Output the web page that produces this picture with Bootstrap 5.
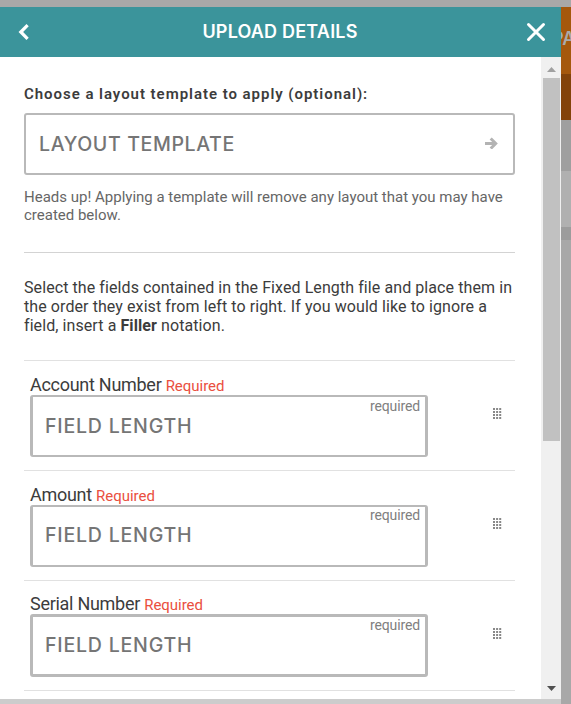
<!DOCTYPE html>
<html lang="en">
<head>
<meta charset="utf-8">
<meta name="viewport" content="width=device-width, initial-scale=1">
<title>Upload Details</title>
<link href="https://cdn.jsdelivr.net/npm/bootstrap@5.3.0/dist/css/bootstrap.min.css" rel="stylesheet">
<style>
body{font-family:Roboto,"Liberation Sans",sans-serif;color:#3c3c3c;background:#a8a8a8;height:704px;overflow:hidden}
.stage{height:697px;margin-top:7px}
.dialog-pane{width:561px;background:#ccc}
.title-bar{height:50px;background:#3b949b;color:#fff;padding:0 15px 0 18px}
.plain-btn{background:none;border:0;padding:0;line-height:0;color:inherit}
.title-text{font:600 18px/50px Inter,sans-serif;letter-spacing:.2px;margin:0 0 0 4px}
.scroll-area{height:642px;background:#fff}
.sheet{width:541px;padding:27px 26px 0 24px}
.choose-label{font-size:15px;line-height:20px;font-weight:600;letter-spacing:.96px;display:block;margin-bottom:9px}
.big-box{border:2px solid #b9b9b9;border-radius:3px;height:62px;padding:0 15px 0 13px;background:#fff;color:#757575;font:500 19.6px/58px Inter,sans-serif;letter-spacing:.6px;width:100%;text-align:left}
.field-box{width:398px;border-width:2px 3px;padding-left:12px;letter-spacing:.76px}
.field-mid{line-height:56px}
.field-last{border-width:3px;height:63px;line-height:57px}
.flag{position:absolute;top:0;right:5px;font:14px/18px Roboto,sans-serif;letter-spacing:-.12px;color:#808080}
.field-mid .flag,.field-last .flag{top:-1px}
.help{font-size:15px;line-height:18px;color:#666;margin:13px 0 28px}
.rule{height:1px;background:#d3d3d3}
.intro{font-size:16px;line-height:19px;letter-spacing:.085px;margin:25px 0 25px}
.field-row{height:110px;border-top:1px solid #e1e1e1;padding:14px 13px 0 6px}
.field-name{font-size:18px;line-height:20px;height:20px;letter-spacing:-.28px;display:block;white-space:nowrap}
.field-row:nth-child(n+3) .field-name{margin-top:-1px}
.req{font-size:15px;letter-spacing:-.03px;color:#ea4f40}
.grip{margin-top:33px;line-height:0}
.bar{width:20px;background:#f0f0f0;padding-right:1px;padding-left:2px}
.bar-btn{height:21px}
.thumb{height:363px;background:#c1c1c1}
.page-strip{width:10px}
.s1{height:67px;background:#a5580d;color:#aaa;font:600 18px/64px Inter,sans-serif;overflow:hidden}
.s1 span{display:block;margin-left:-9px}
.s2{height:46px;background:#83430a}.s3{height:51px;background:#9f9f9f}.s4{height:56px;background:#b0b0b0}.s5{height:13px;background:#9c9c9c}
</style>
<script src="https://cdn.jsdelivr.net/npm/bootstrap@5.3.0/dist/js/bootstrap.bundle.min.js"></script>
</head>
<body>
<svg width="0" height="0" class="position-absolute"><defs>
<g id="dots" fill="#888"><path d="M0 0h2v2H0zM3.100 0h2v2h-2zM6.200 0h2v2h-2zM0 3h2v2H0zM3.100 3h2v2h-2zM6.200 3h2v2h-2zM0 6h2v2H0zM3.100 6h2v2h-2zM6.200 6h2v2h-2zM0 9h2v2H0zM3.100 9h2v2h-2zM6.200 9h2v2h-2z"/></g>
</defs></svg>
<div class="stage d-flex">
  <div class="dialog-pane flex-shrink-0">
    <header class="title-bar d-flex justify-content-between align-items-center">
      <button class="plain-btn" aria-label="Back"><svg width="12" height="16" viewBox="0 0 12 16"><path d="M9.600 1.200 2.800 8l6.800 6.800" fill="none" stroke="currentColor" stroke-width="3.200"/></svg></button>
      <h1 class="title-text">UPLOAD DETAILS</h1>
      <button class="plain-btn" aria-label="Close"><svg width="20" height="20" viewBox="0 0 20 20"><path d="M2.500 2.500l15 15M17.500 2.500l-15 15" stroke="currentColor" stroke-width="3" stroke-linecap="round"/></svg></button>
    </header>
    <div class="scroll-area d-flex overflow-hidden">
      <main class="sheet flex-shrink-0">
        <label class="choose-label">Choose a layout template to apply (optional):</label>
        <button class="big-box d-flex justify-content-between align-items-center"><span>LAYOUT TEMPLATE</span>
          <svg class="mb-1" width="13" height="14" viewBox="0 0 13 14"><path d="M0 8.500h10M5.700 3.500l5 5-5 5" fill="none" stroke="#b3b3b3" stroke-width="3"/></svg></button>
        <p class="help">Heads up! Applying a template will remove any layout that you may have<br>created below.</p>
        <div class="rule"></div>
        <p class="intro">Select the fields contained in the Fixed Length file and place them in<br>the order they exist from left to right. If you would like to ignore a<br>field, insert a <b>Filler</b> notation.</p>
        <div>
          <div class="field-row d-flex justify-content-between">
            <div><label class="field-name">Account Number <span class="req">Required</span></label>
              <div class="big-box field-box position-relative">FIELD LENGTH<span class="flag">required</span></div></div>
            <div class="grip"><svg width="9" height="12"><use href="#dots"/></svg></div>
          </div>
          <div class="field-row d-flex justify-content-between">
            <div><label class="field-name">Amount <span class="req">Required</span></label>
              <div class="big-box field-box field-mid position-relative">FIELD LENGTH<span class="flag">required</span></div></div>
            <div class="grip"><svg width="9" height="12"><use href="#dots"/></svg></div>
          </div>
          <div class="field-row d-flex justify-content-between">
            <div><label class="field-name">Serial Number <span class="req">Required</span></label>
              <div class="big-box field-box field-last position-relative">FIELD LENGTH<span class="flag">required</span></div></div>
            <div class="grip"><svg width="9" height="12"><use href="#dots"/></svg></div>
          </div>
          <div class="field-row"></div>
        </div>
      </main>
      <div class="bar d-flex flex-column">
        <div class="bar-btn d-flex align-items-center justify-content-center"><svg class="mt-1" width="9" height="5"><path d="M0 5 4.500 0 9 5z" fill="#a0a0a0"/></svg></div>
        <div class="thumb"></div>
        <div class="bar-btn mt-auto d-flex align-items-center justify-content-center"><svg width="9" height="5"><path d="M0 0h9L4.500 5z" fill="#505050"/></svg></div>
      </div>
    </div>
  </div>
  <div class="page-strip overflow-hidden" aria-hidden="true">
    <div class="s1"><span>PA</span></div><div class="s2"></div><div class="s3"></div><div class="s4"></div><div class="s5"></div>
  </div>
</div>
</body>
</html>
